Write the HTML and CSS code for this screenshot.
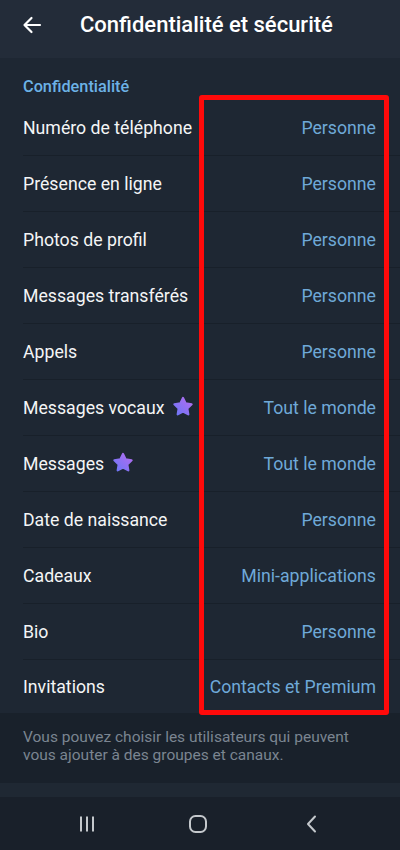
FILE: index.html
```html
<!DOCTYPE html>
<html lang="fr">
<head>
    <meta charset="UTF-8">
    <meta name="viewport" content="width=device-width, initial-scale=1.0">
    <title>Confidentialité et sécurité</title>
    <link rel="stylesheet" href="styles.css">
</head>
<body>
    <div class="screen">
        <header class="topbar">
            <svg class="back" width="20" height="18" viewBox="0 0 20 18">
                <path d="M18 9H3M9.5 2L2.5 9l7 7" fill="none" stroke="#fff" stroke-width="2.2" stroke-linecap="round" stroke-linejoin="round"/>
            </svg>
            <h1>Confidentialité et sécurité</h1>
        </header>

        <section class="list">
            <h2 class="section-title">Confidentialité</h2>
            <div class="row"><span class="label">Numéro de téléphone</span><span class="value">Personne</span></div>
            <div class="row"><span class="label">Présence en ligne</span><span class="value">Personne</span></div>
            <div class="row"><span class="label">Photos de profil</span><span class="value">Personne</span></div>
            <div class="row"><span class="label">Messages transférés</span><span class="value">Personne</span></div>
            <div class="row"><span class="label">Appels</span><span class="value">Personne</span></div>
            <div class="row">
                <span class="label">Messages vocaux
                    <svg class="star" width="22" height="22" viewBox="0 0 24 24"><use href="#star"/></svg>
                </span>
                <span class="value">Tout le monde</span>
            </div>
            <div class="row">
                <span class="label">Messages
                    <svg class="star" width="22" height="22" viewBox="0 0 24 24"><use href="#star"/></svg>
                </span>
                <span class="value">Tout le monde</span>
            </div>
            <div class="row"><span class="label">Date de naissance</span><span class="value">Personne</span></div>
            <div class="row"><span class="label">Cadeaux</span><span class="value">Mini-applications</span></div>
            <div class="row"><span class="label">Bio</span><span class="value">Personne</span></div>
            <div class="row last"><span class="label">Invitations</span><span class="value">Contacts et Premium</span></div>

            <div class="highlight"></div>
        </section>

        <p class="hint">Vous pouvez choisir les utilisateurs qui peuvent vous ajouter à des groupes et canaux.</p>
        <div class="next-section"></div>

        <nav class="navbar">
            <svg class="nav-recent" width="20" height="20" viewBox="0 0 20 20">
                <path d="M4 2.5v15M10 2.5v15M16 2.5v15" stroke="#c4c8cc" stroke-width="2" fill="none"/>
            </svg>
            <svg class="nav-home" width="20" height="20" viewBox="0 0 20 20">
                <rect x="2" y="2" width="16" height="16" rx="5.5" stroke="#c4c8cc" stroke-width="2" fill="none"/>
            </svg>
            <svg class="nav-back" width="20" height="20" viewBox="0 0 20 20">
                <path d="M14 2.5l-7 7.5 7 7.5" stroke="#c4c8cc" stroke-width="2" fill="none" stroke-linecap="round" stroke-linejoin="round"/>
            </svg>
        </nav>
    </div>

    <svg width="0" height="0" class="defs">
        <defs>
            <linearGradient id="starGrad" x1="1" y1="0" x2="0" y2="1">
                <stop offset="0" stop-color="#b56cef"/>
                <stop offset="1" stop-color="#6b76f7"/>
            </linearGradient>
            <path id="star" fill="url(#starGrad)" stroke="url(#starGrad)" stroke-width="2.4" stroke-linejoin="round"
                  d="M12 2.2l2.9 5.9 6.5.9-4.7 4.5 1.1 6.5L12 16.9l-5.8 3.1 1.1-6.5L2.6 9l6.5-.9z"/>
        </defs>
    </svg>
</body>
</html>
```

FILE: styles.css
```css
body {
    margin: 0;
    font-family: Roboto, "Noto Sans", sans-serif;
    background: #1e2733;
}
.screen {
    width: 400px;
    height: 850px;
    display: flex;
    flex-direction: column;
    overflow: hidden;
}
.topbar {
    height: 58px;
    background: #232c39;
    display: flex;
    align-items: flex-start;
    padding: 0 22px;
    box-sizing: border-box;
}
.back {
    margin-top: 16px;
}
.topbar h1 {
    margin: 0 0 0 38px;
    line-height: 50px;
    font-size: 22px;
    font-weight: 500;
    color: #ffffff;
}
.list {
    position: relative;
    background: #1e2733;
}
.section-title {
    margin: 0;
    padding: 20px 23px 0;
    height: 42px;
    box-sizing: border-box;
    line-height: 18px;
    font-size: 16.3px;
    font-weight: 500;
    color: #6cb2e6;
}
.row {
    height: 56px;
    margin-left: 23px;
    padding-right: 24px;
    display: flex;
    align-items: center;
    justify-content: space-between;
    border-bottom: 1px solid #18202a;
    box-sizing: border-box;
}
.row.last {
    height: 53px;
    border-bottom: none;
}
.label {
    font-size: 17.7px;
    color: #f4f5f6;
    display: flex;
    align-items: center;
    gap: 8px;
}
.value {
    font-size: 17.7px;
    color: #6fa9d8;
}
.star {
    margin-top: -1px;
}
.highlight {
    position: absolute;
    left: 199px;
    top: 37px;
    width: 190px;
    height: 620px;
    border: 5px solid #ff0a0a;
    border-radius: 3px;
    box-sizing: border-box;
}
.hint {
    margin: 0;
    background: #19212b;
    padding: 15px 23px 19px;
    font-size: 15.5px;
    line-height: 18px;
    color: #7b8591;
    height: 70px;
    box-sizing: border-box;
}
.next-section {
    height: 14px;
    background: #1f2833;
}
.navbar {
    flex: 1;
    background: #19202a;
    display: flex;
    align-items: center;
    padding-left: 77px;
}
.nav-home {
    margin-left: 91px;
}
.nav-back {
    margin-left: 93px;
}
.defs {
    position: absolute;
}
```
